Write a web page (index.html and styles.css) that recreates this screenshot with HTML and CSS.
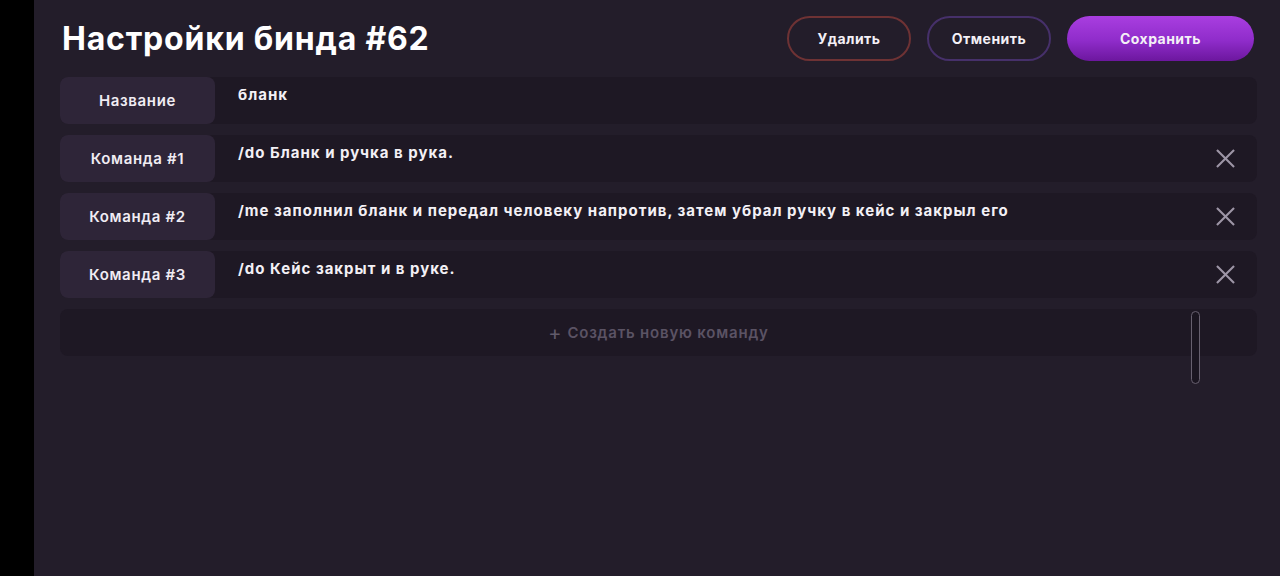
FILE: index.html
```html
<!DOCTYPE html>
<html lang="ru">
<head>
<meta charset="utf-8">
<title>Настройки бинда #62</title>
<link rel="stylesheet" href="styles.css">
</head>
<body>
<div class="strip"></div>
<main class="main">
  <header class="header">
    <h1 class="title">Настройки бинда #62</h1>
    <div class="actions">
      <button class="btn btn-delete">Удалить</button>
      <button class="btn btn-cancel">Отменить</button>
      <button class="btn btn-save">Сохранить</button>
    </div>
  </header>
  <section class="list">
    <div class="row">
      <div class="label">Название</div>
      <div class="value">бланк</div>
    </div>
    <div class="row">
      <div class="label">Команда #1</div>
      <div class="value">/do Бланк и ручка в рука.</div>
      <svg class="close" viewBox="0 0 20 20"><path d="M1 1L19 19M19 1L1 19"/></svg>
    </div>
    <div class="row">
      <div class="label">Команда #2</div>
      <div class="value">/me заполнил бланк и передал человеку напротив, затем убрал ручку в кейс и закрыл его</div>
      <svg class="close" viewBox="0 0 20 20"><path d="M1 1L19 19M19 1L1 19"/></svg>
    </div>
    <div class="row">
      <div class="label">Команда #3</div>
      <div class="value">/do Кейс закрыт и в руке.</div>
      <svg class="close" viewBox="0 0 20 20"><path d="M1 1L19 19M19 1L1 19"/></svg>
    </div>
    <div class="row create">
      <span class="plus">+</span>Создать новую команду
      <div class="scrollbar"></div>
    </div>
  </section>
</main>
</body>
</html>
```
FILE: styles.css
```css
* { box-sizing: border-box; }
html, body { margin: 0; height: 100%; }
body {
  display: flex;
  background: #000;
  font-family: Inter, "Noto Sans", sans-serif;
  color: #f2eff5;
  overflow: hidden;
}
.strip { width: 34px; flex: none; background: #000; }
.main {
  flex: 1;
  background: #231d2a;
  padding: 16px 23px 0 26px;
}
.header {
  display: flex;
  align-items: center;
  justify-content: space-between;
  height: 45px;
  padding-right: 3px;
}
.title {
  margin: 0 0 0 2px;
  font-size: 32px;
  font-weight: 700;
  letter-spacing: 0.8px;
  color: #ffffff;
}
.actions { display: flex; gap: 16px; }
.btn {
  height: 45px;
  border-radius: 23px;
  font-family: inherit;
  font-size: 14px;
  font-weight: 700;
  letter-spacing: 0.45px;
  color: #f4f0f6;
  background: transparent;
  border: 2px solid;
  padding: 0;
}
.btn-delete { width: 124px; border-color: #6e3234; }
.btn-cancel { width: 124px; border-color: #46306a; }
.btn-save {
  width: 187px;
  border: none;
  background: linear-gradient(180deg, #a93ee0 0%, #8f2cca 55%, #6c179e 100%);
}
.list {
  display: flex;
  flex-direction: column;
  gap: 11px;
  margin-top: 16px;
}
.row {
  position: relative;
  display: flex;
  align-items: flex-start;
  height: 47px;
  border-radius: 8px;
  background: #1e1824;
}
.label {
  width: 155px;
  height: 47px;
  flex: none;
  display: flex;
  align-items: center;
  justify-content: center;
  border-radius: 8px;
  background: #2e2538;
  font-size: 15px;
  font-weight: 600;
  letter-spacing: 0.65px;
  color: #f0ecf3;
}
.value {
  flex: 1;
  padding: 8px 0 0 23px;
  font-size: 15px;
  font-weight: 700;
  letter-spacing: 1px;
  line-height: 20px;
  color: #f3f0f5;
}
.close {
  width: 19px;
  height: 19px;
  margin: 14px 22px 0 0;
  flex: none;
  fill: none;
  stroke: #9d95a6;
  stroke-width: 2.2;
}
.create {
  align-items: center;
  justify-content: center;
  font-size: 15px;
  font-weight: 600;
  letter-spacing: 0.8px;
  color: #5b5364;
}
.plus {
  font-size: 20px;
  font-weight: 400;
  margin-right: 5px;
  line-height: 1;
  color: #615a6a;
}
.scrollbar {
  position: absolute;
  left: 1131px;
  top: 2px;
  width: 9px;
  height: 73px;
  border: 1px solid #67606f;
  border-radius: 5px;
  background: #1a1520;
}
```
